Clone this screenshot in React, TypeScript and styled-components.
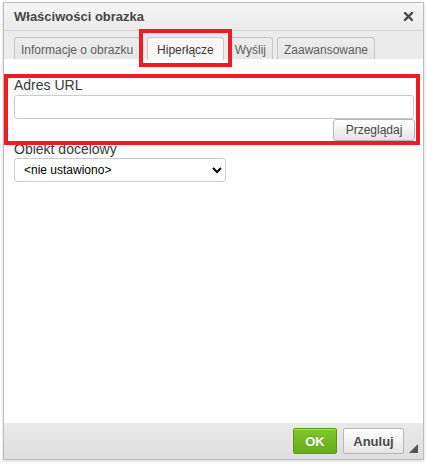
import React from "react";
import styled, { createGlobalStyle } from "styled-components";

const GlobalStyle = createGlobalStyle`
  html, body { margin: 0; padding: 0; background: #fff; }
  body { font-family: "Liberation Sans", Arial, sans-serif; }
  * { box-sizing: border-box; }
`;

const Page = styled.div`
  padding: 2px 0 0 3px;
  width: 427px;
  height: 466px;
`;

const Dialog = styled.div`
  position: relative;
  width: 421px;
  height: 458px;
  border: 1px solid #bcbcbc;
  box-shadow: 0 1px 3px rgba(0, 0, 0, 0.18);
  display: flex;
  flex-direction: column;
  background: #fff;
`;

const TitleBar = styled.div`
  height: 28px;
  flex: none;
  display: flex;
  align-items: center;
  justify-content: space-between;
  padding: 0 9px 0 10px;
  background: linear-gradient(#f5f5f5, #ebebeb);
  border-bottom: 1px solid #d4d4d4;
  font-weight: bold;
  font-size: 13px;
  color: #474747;
`;

const Close = styled.button`
  border: 0;
  background: none;
  padding: 0;
  width: 10px;
  height: 10px;
  display: flex;
  cursor: pointer;
`;

const TabsBar = styled.div`
  height: 28px;
  flex: none;
  display: flex;
  align-items: flex-end;
  gap: 4px;
  padding-left: 10px;
  background: #ebebeb;
`;

const Tab = styled.div<{ $active?: boolean }>`
  height: ${(p) => (p.$active ? 23 : 22)}px;
  margin-bottom: ${(p) => (p.$active ? -1 : 0)}px;
  margin-left: ${(p) => (p.$active ? 3 : 0)}px;
  padding: 0 ${(p) => (p.$active ? 9 : 6)}px;
  display: flex;
  align-items: center;
  padding-top: ${(p) => (p.$active ? 2 : 3)}px;
  border: 1px solid ${(p) => (p.$active ? "#c9c9c9" : "#c4c4c4")};
  border-bottom: none;
  border-radius: 3px 3px 0 0;
  background: ${(p) => (p.$active ? "#f8f8f8" : "linear-gradient(#ececec, #e6e6e6)")};
  font-size: 12px;
  color: ${(p) => (p.$active ? "#383838" : "#606060")};
  white-space: nowrap;
  position: relative;
  z-index: 1;
`;

const Content = styled.div`
  flex: 1;
  background: #fff;
  padding: 18px 9px 0 10px;
  display: flex;
  flex-direction: column;
`;

const Label = styled.label`
  display: block;
  font-size: 14px;
  line-height: 16px;
  color: #383838;
`;

const TextInput = styled.input`
  display: block;
  width: 100%;
  height: 24px;
  margin-top: 2px;
  border: 1px solid #c9cccf;
  border-radius: 3px;
  background: #fff;
  font: 12px "Liberation Sans", Arial, sans-serif;
  padding: 0 6px;
  outline: none;
`;

const BrowseRow = styled.div`
  display: flex;
  justify-content: flex-end;
  margin-right: -1px;
`;

const SmallButton = styled.button`
  height: 22px;
  width: 82px;
  border: 1px solid #b6b6b6;
  border-radius: 3px;
  background: linear-gradient(#ffffff, #e4e4e4);
  font: 12px "Liberation Sans", Arial, sans-serif;
  color: #474747;
  padding: 0;
`;

const Select = styled.select`
  display: block;
  width: 212px;
  height: 24px;
  margin-top: 1px;
  border: 1px solid #c9cccf;
  border-radius: 3px;
  background: #fff;
  font: 12px "Liberation Sans", Arial, sans-serif;
  color: #000;
  padding: 0 5px;
  outline: none;
`;

const Footer = styled.div`
  position: relative;
  height: 36px;
  flex: none;
  display: flex;
  align-items: center;
  justify-content: flex-end;
  gap: 6px;
  padding-right: 19px;
  background: linear-gradient(#e9e9e9, #dedede);
`;

const DialogButton = styled.button<{ $primary?: boolean }>`
  height: 26px;
  padding: 0;
  width: ${(p) => (p.$primary ? 44 : 61)}px;
  border-radius: 2px;
  border: 1px solid ${(p) => (p.$primary ? "#5a9a12" : "#b6b6b6")};
  background: ${(p) =>
    p.$primary ? "linear-gradient(#80c72b, #66ac16)" : "linear-gradient(#ffffff, #e4e4e4)"};
  color: ${(p) => (p.$primary ? "#fff" : "#474747")};
  font: bold 13px "Liberation Sans", Arial, sans-serif;
  text-shadow: ${(p) => (p.$primary ? "0 -1px 0 rgba(0,0,0,0.2)" : "0 1px 0 #fff")};
  box-shadow: inset 0 1px 0 rgba(255, 255, 255, 0.35);
`;

const Grip = styled.svg`
  position: absolute;
  right: 5px;
  bottom: 6px;
`;

const Highlight = styled.div<{ $x: number; $y: number; $w: number; $h: number }>`
  position: absolute;
  left: ${(p) => p.$x}px;
  top: ${(p) => p.$y}px;
  width: ${(p) => p.$w}px;
  height: ${(p) => p.$h}px;
  border: 4px solid #ed1c24;
  pointer-events: none;
  z-index: 5;
`;

export default function App() {
  return (
    <Page>
      <GlobalStyle />
      <Dialog>
        <TitleBar>
          <span>Właściwości obrazka</span>
          <Close aria-label="Zamknij">
            <svg width="9" height="9" viewBox="0 0 9 9">
              <path d="M1 1 L8 8 M8 1 L1 8" stroke="#4a4a4a" strokeWidth="2.4" strokeLinecap="square" />
            </svg>
          </Close>
        </TitleBar>
        <TabsBar>
          <Tab>Informacje o obrazku</Tab>
          <Tab $active>Hiperłącze</Tab>
          <Tab>Wyślij</Tab>
          <Tab>Zaawansowane</Tab>
        </TabsBar>
        <Content>
          <Label>Adres URL</Label>
          <TextInput type="text" />
          <BrowseRow>
            <SmallButton>Przeglądaj</SmallButton>
          </BrowseRow>
          <Label>Obiekt docelowy</Label>
          <Select defaultValue="">
            <option value="">&lt;nie ustawiono&gt;</option>
            <option value="_blank">Nowe okno (_blank)</option>
          </Select>
        </Content>
        <Footer>
          <DialogButton $primary>OK</DialogButton>
          <DialogButton>Anuluj</DialogButton>
          <Grip width="9" height="9" viewBox="0 0 9 9">
            <path d="M9 0 L9 9 L0 9 Z" fill="#555" />
          </Grip>
        </Footer>
        <Highlight $x={135} $y={26} $w={93} $h={38} />
        <Highlight $x={0} $y={71} $w={416} $h={71} />
      </Dialog>
    </Page>
  );
}
